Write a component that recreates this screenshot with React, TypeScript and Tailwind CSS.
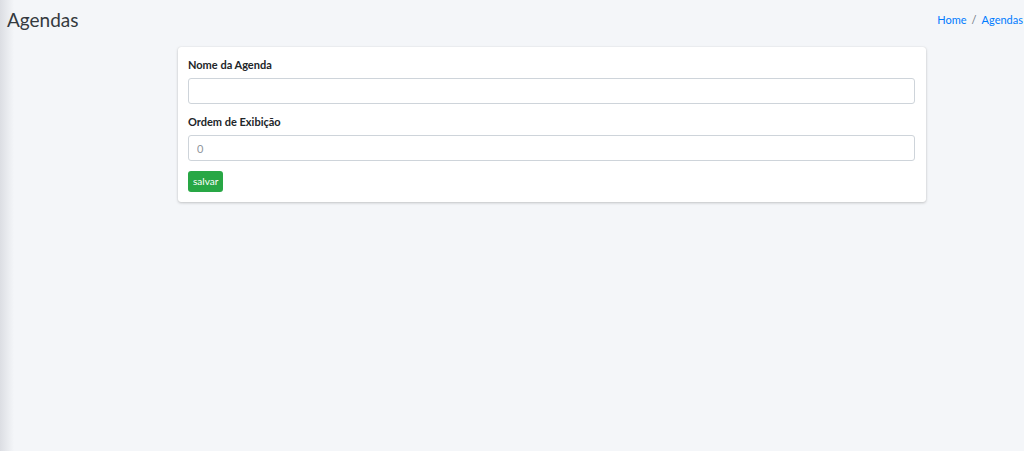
export default function App() {
  return (
    <div
      className="relative min-h-[451px] w-[1024px] overflow-hidden bg-[#f4f6f9] text-[#212529]"
      style={{ fontFamily: '"Source Sans Pro", Lato, "Noto Sans", sans-serif' }}
    >
      <div className="absolute inset-y-0 left-0 w-[14px] bg-gradient-to-r from-[#dcdee3] to-[#f4f6f9]" />
      <div className="relative flex items-start justify-between pl-[7px] pt-[8px]">
        <h1 className="text-[19px] leading-[24px] text-[#343a40]">Agendas</h1>
        <div className="mr-[1px] mt-[4px] flex items-center gap-[5px] text-[11px] text-[#007bff]">
          <span>Home</span>
          <span className="text-[#6c757d]">/</span>
          <span>Agendas</span>
        </div>
      </div>
      <div className="relative mt-[15px] ml-[178px] w-[748px] rounded-[3px] bg-white px-[10px] pt-[11px] pb-[10px] shadow-[0_0_1px_rgba(0,0,0,0.13),0_1px_3px_rgba(0,0,0,0.2)]">
        <label className="block text-[11px] font-bold leading-[14px]">Nome da Agenda</label>
        <input
          className="mt-[6px] block h-[26px] w-[727px] rounded-[3px] border border-[#ced4da] bg-white px-[8px] text-[11px] outline-none"
          type="text"
        />
        <label className="mt-[11px] block text-[11px] font-bold leading-[14px]">Ordem de Exibição</label>
        <input
          className="mt-[6px] block h-[26px] w-[727px] rounded-[3px] border border-[#ced4da] bg-white px-[8px] text-[11px] text-[#495057] outline-none placeholder:text-[#8f969c]"
          type="text"
          placeholder="0"
        />
        <button className="mt-[10px] block h-[21px] rounded-[3px] bg-[#28a745] px-[5px] text-[10px] leading-[21px] text-white">
          salvar
        </button>
      </div>
    </div>
  )
}
